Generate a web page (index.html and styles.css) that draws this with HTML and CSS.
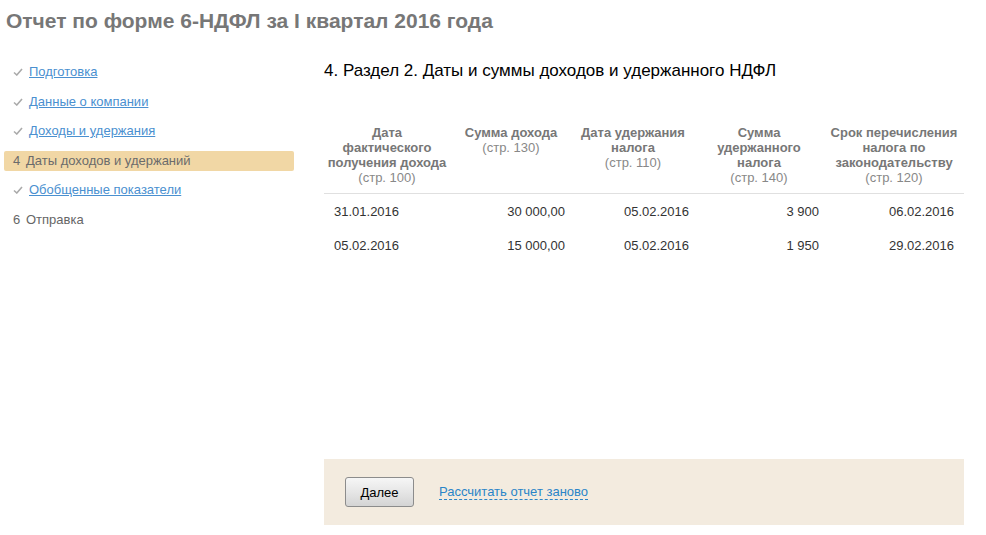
FILE: index.html
```html
<!DOCTYPE html>
<html lang="ru">
<head>
  <meta charset="UTF-8">
  <meta name="viewport" content="width=device-width, initial-scale=1.0">
  <title>Отчет по форме 6-НДФЛ</title>
  <link rel="stylesheet" href="styles.css">
</head>
<body>
  <div class="page">
    <h1 class="title">Отчет по форме 6-НДФЛ за I квартал 2016 года</h1>
    <div class="content">
      <ul class="steps">
        <li class="step done"><svg class="mark" viewBox="0 0 10 8"><path d="M1 4.5 L3.8 7 L9 1" /></svg><a href="#">Подготовка</a></li>
        <li class="step done"><svg class="mark" viewBox="0 0 10 8"><path d="M1 4.5 L3.8 7 L9 1" /></svg><a href="#">Данные о компании</a></li>
        <li class="step done"><svg class="mark" viewBox="0 0 10 8"><path d="M1 4.5 L3.8 7 L9 1" /></svg><a href="#">Доходы и удержания</a></li>
        <li class="step current"><span class="num">4</span>Даты доходов и удержаний</li>
        <li class="step done"><svg class="mark" viewBox="0 0 10 8"><path d="M1 4.5 L3.8 7 L9 1" /></svg><a href="#">Обобщенные показатели</a></li>
        <li class="step"><span class="num">6</span>Отправка</li>
      </ul>

      <div class="main">
        <h2 class="section">4. Раздел 2. Даты и суммы доходов и удержанного НДФЛ</h2>
        <table class="grid">
          <thead>
            <tr>
              <th class="c1">Дата<br>фактического<br>получения дохода<br><span class="ref">(стр. 100)</span></th>
              <th class="c2">Сумма дохода<br><span class="ref">(стр. 130)</span></th>
              <th class="c3">Дата удержания<br>налога<br><span class="ref">(стр. 110)</span></th>
              <th class="c4">Сумма<br>удержанного<br>налога<br><span class="ref">(стр. 140)</span></th>
              <th class="c5">Срок перечисления<br>налога по<br>законодательству<br><span class="ref">(стр. 120)</span></th>
            </tr>
          </thead>
          <tbody>
            <tr>
              <td class="c1">31.01.2016</td>
              <td class="c2">30 000,00</td>
              <td class="c3">05.02.2016</td>
              <td class="c4">3 900</td>
              <td class="c5">06.02.2016</td>
            </tr>
            <tr>
              <td class="c1">05.02.2016</td>
              <td class="c2">15 000,00</td>
              <td class="c3">05.02.2016</td>
              <td class="c4">1 950</td>
              <td class="c5">29.02.2016</td>
            </tr>
          </tbody>
        </table>

        <div class="actions">
          <button class="btn">Далее</button>
          <a href="#" class="dashed">Рассчитать отчет заново</a>
        </div>
      </div>
    </div>
  </div>
</body>
</html>
```

FILE: styles.css
```css
body { margin: 0; font-family: "Liberation Sans", Arial, sans-serif; font-size: 13px; color: #333; background: #fff; }
.page { height: 535px; display: flex; flex-direction: column; }
.title { margin: 0; padding: 9px 6px 0; height: 30px; font-size: 21px; font-weight: bold; color: #777; }
.content { flex: 1; display: flex; }

.steps { list-style: none; margin: 23px 0 0 4px; padding: 0; width: 290px; display: flex; flex-direction: column; gap: 9.5px; }
.step { height: 20px; line-height: 20px; padding-left: 9px; color: #666; border-radius: 2px; display: flex; align-items: center; }
.step a { color: #4a90d0; }
.step .mark { width: 10px; height: 8px; margin-right: 6px; fill: none; stroke: #aaa; stroke-width: 1.6; }
.step .num { display: inline-block; width: 13px; }
.step.current { background: #f1d7a5; color: #6b6b6b; }

.main { width: 640px; margin-left: 30px; display: flex; flex-direction: column; padding-bottom: 10px; }
.section { margin: 22px 0 0; height: 20px; line-height: 20px; font-size: 17px; font-weight: normal; color: #000; }

.grid { margin-top: 44px; border-collapse: collapse; width: 640px; table-layout: fixed; }
.grid th { font-weight: bold; color: #777; line-height: 15px; vertical-align: top; padding: 0 0 8px; text-align: center; border-bottom: 1px solid #e0e0e0; }
.grid th .ref { font-weight: normal; color: #888; }
.grid td { height: 34px; padding: 0; color: #333; }
.grid .c1 { width: 126px; }
.grid .c2 { width: 122px; }
.grid .c3 { width: 122px; }
.grid .c4 { width: 130px; }
.grid .c5 { width: 140px; }
.grid td.c1 { padding-left: 10px; }
.grid td.c2 { text-align: right; padding-right: 7px; }
.grid td.c3 { text-align: right; padding-right: 5px; }
.grid td.c4 { text-align: right; padding-right: 5px; }
.grid td.c5 { text-align: right; padding-right: 10px; }

.actions { margin-top: auto; height: 66px; background: #f3ebdf; display: flex; align-items: center; padding-left: 21px; gap: 25px; }
.btn { width: 69px; height: 30px; font-family: inherit; font-size: 13px; color: #000; border: 1px solid #8c8c8c; border-radius: 3px; background: linear-gradient(#f6f6f6, #e6e6e6 50%, #d4d4d4); }
.dashed { color: #2a85c8; text-decoration: none; border-bottom: 1px dashed #2a85c8; line-height: 15px; }
```
